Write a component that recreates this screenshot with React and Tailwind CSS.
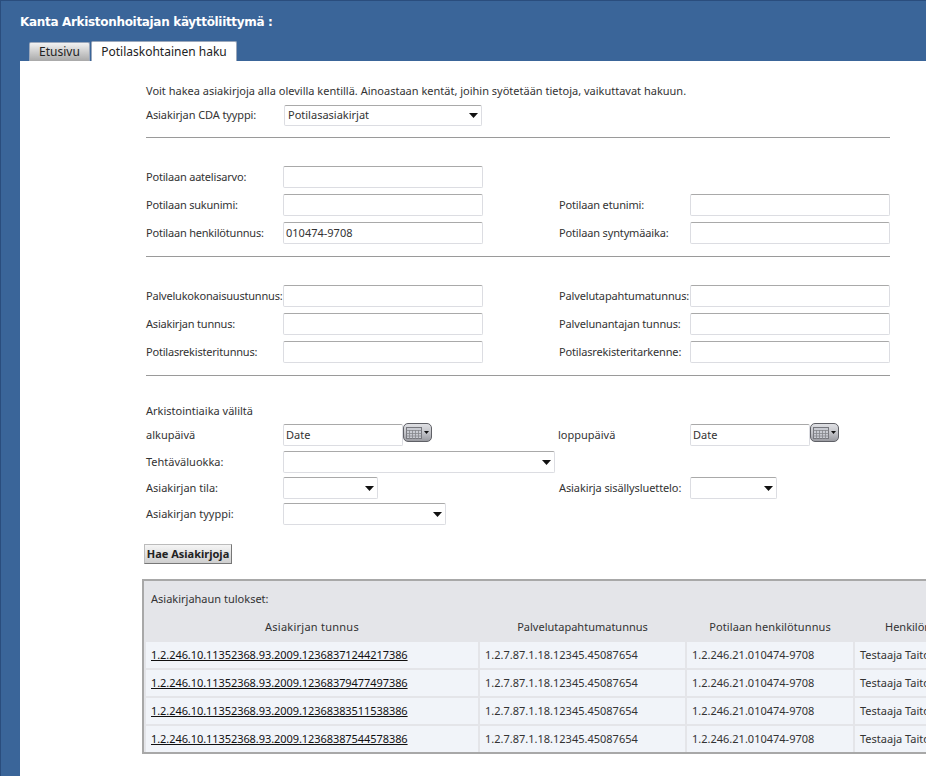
function Arrow() {
  return <svg width="9" height="5" viewBox="0 0 9 5" className="shrink-0"><path d="M0 0h9L4.5 5z" fill="#111" /></svg>;
}
function Input({ value = "", w = "w-[200px]" }) {
  return <div className={`${w} h-[22px] shrink-0 flex items-center bg-white rounded-[2px] border border-[#dcdde2] border-t-[#a9a9a9] pl-[2px] text-[#333]`}>{value}</div>;
}
function Sel({ value = "", w }) {
  return <div className={`${w} h-[22px] shrink-0 flex items-center justify-between bg-white rounded-[2px] border border-[#dcdde2] border-t-[#a9a9a9] pl-[3px] pr-[3px] text-[#333]`}><span>{value}</span><Arrow /></div>;
}
function Cal() {
  return (
    <div className="mb-[4px] w-[29px] h-[19px] shrink-0 flex items-center justify-center gap-[2px] rounded-[5px] border border-[#5f6066] bg-gradient-to-b from-[#dfe0e4] via-[#c4c5ca] to-[#9a9ba1]">
      <svg width="16" height="12" viewBox="0 0 16 12"><rect x=".5" y=".5" width="15" height="11" fill="#c9cbd2" stroke="#77787e" /><path d="M.5 3.500h15M.5 6.500h15M.5 9h15M3.500 3v9M6.500 3v9M9.500 3v9M12.500 3v9" stroke="#85868c" strokeWidth=".8" /></svg>
      <svg width="5" height="3" viewBox="0 0 5 3"><path d="M0 0h5L2.500 3z" fill="#111" /></svg>
    </div>
  );
}
function Row({ left, right, leftInput, rightInput, mt = "mt-[6px]" }) {
  return (
    <div className={`flex items-center ${mt}`}>
      <div className="w-[137px] shrink-0 whitespace-nowrap tracking-[-0.2px]">{left}</div>
      {leftInput}
      <div className="ml-[76px] w-[131px] shrink-0 whitespace-nowrap tracking-[-0.15px]">{right}</div>
      {rightInput}
    </div>
  );
}
const Hr = ({ mt }) => <div className={`h-[1px] bg-[#9a9a9a] ${mt}`} />;
const rows = ["1.2.246.10.11352368.93.2009.12368371244217386", "1.2.246.10.11352368.93.2009.12368379477497386", "1.2.246.10.11352368.93.2009.12368383511538386", "1.2.246.10.11352368.93.2009.12368387544578386"];

export default function App() {
  return (
    <div className="w-[926px] h-[776px] overflow-hidden bg-[#3a6599] border-l border-t border-[#2a4d7d] text-[11px] leading-[14px] text-[#333] font-['Noto_Sans',sans-serif]">
      <div className="pl-[19px] pt-[14px] h-[40px] text-white font-bold text-[12px] font-['DejaVu_Sans',sans-serif] tracking-[-0.32px]">Kanta Arkistonhoitajan käyttöliittymä :</div>
      <div className="flex items-end pl-[28px] h-[20px]">
        <div className="w-[61px] h-[19px] flex items-center justify-center rounded-t-[2px] border border-b-0 border-[#9aa7bb] bg-gradient-to-b from-[#f2f2f2] to-[#a9a9a9] text-[#222] text-[12px]">Etusivu</div>
        <div className="ml-[1px] w-[146px] h-[20px] flex items-center justify-center rounded-t-[2px] border border-b-0 border-[#9aa7bb] bg-white text-[#222] text-[12px]">Potilaskohtainen haku</div>
      </div>
      <div className="ml-[19px] h-[720px] bg-white pt-[23px] pl-[126px] pr-[36px] overflow-hidden">
        <div className="whitespace-nowrap">Voit hakea asiakirjoja alla olevilla kentillä. Ainoastaan kentät, joihin syötetään tietoja, vaikuttavat hakuun.</div>
        <div className="flex items-center mt-[7px] h-[20px]">
          <div className="w-[138px] tracking-[-0.1px]">Asiakirjan CDA tyyppi:</div>
          <Sel value="Potilasasiakirjat" w="w-[198px] !h-[21px]" />
        </div>
        <Hr mt="mt-[12px]" />
        <Row mt="mt-[28px]" left="Potilaan aatelisarvo:" leftInput={<Input />} />
        <Row left="Potilaan sukunimi:" leftInput={<Input />} right="Potilaan etunimi:" rightInput={<Input />} />
        <Row left="Potilaan henkilötunnus:" leftInput={<Input value="010474-9708" />} right="Potilaan syntymäaika:" rightInput={<Input />} />
        <Hr mt="mt-[12px]" />
        <Row mt="mt-[28px]" left="Palvelukokonaisuustunnus:" leftInput={<Input />} right="Palvelutapahtumatunnus:" rightInput={<Input />} />
        <Row left="Asiakirjan tunnus:" leftInput={<Input />} right="Palvelunantajan tunnus:" rightInput={<Input />} />
        <Row left="Potilasrekisteritunnus:" leftInput={<Input />} right="Potilasrekisteritarkenne:" rightInput={<Input />} />
        <Hr mt="mt-[12px]" />
        <div className="mt-[28px]">Arkistointiaika väliltä</div>
        <div className="flex items-center mt-[5px]">
          <div className="w-[137px] shrink-0">alkupäivä</div>
          <Input value="Date" w="w-[120px]" />
          <Cal />
          <div className="ml-[126px] w-[132px] shrink-0">loppupäivä</div>
          <Input value="Date" w="w-[120px]" />
          <Cal />
        </div>
        <div className="flex items-center mt-[5px]">
          <div className="w-[137px] shrink-0">Tehtäväluokka:</div>
          <Sel w="w-[272px]" />
        </div>
        <div className="flex items-center mt-[4px]">
          <div className="w-[137px] shrink-0">Asiakirjan tila:</div>
          <Sel w="w-[95px]" />
          <div className="ml-[181px] w-[131px] shrink-0 whitespace-nowrap tracking-[-0.1px]">Asiakirja sisällysluettelo:</div>
          <Sel w="w-[87px]" />
        </div>
        <div className="flex items-center mt-[4px]">
          <div className="w-[137px] shrink-0">Asiakirjan tyyppi:</div>
          <Sel w="w-[163px]" />
        </div>
        <button className="mt-[19px] -ml-[2px] block w-[88px] h-[20px] p-0 whitespace-nowrap border border-[#777] border-t-[#bbb] border-l-[#bbb] bg-gradient-to-b from-[#f5f5f5] to-[#cfcfcf] font-bold text-[11px] text-[#222]">Hae Asiakirjoja</button>
        <div className="mt-[15px] -ml-[4px] w-[900px] h-[175px] bg-[#e4e5e9] border-t-2 border-l-2 border-b-2 border-[#a8a8a8] pl-[2px]">
          <div className="pl-[5px] pt-[11px] h-[26px]">Asiakirjahaun tulokset:</div>
          <table className="border-separate border-spacing-x-[2px] border-spacing-y-[2px] -ml-[2px] mt-[5px] table-fixed w-[900px]">
            <thead>
              <tr className="h-[26px]">
                <th className="w-[332px] font-normal tracking-[0.25px]">Asiakirjan tunnus</th>
                <th className="w-[205px] font-normal">Palvelutapahtumatunnus</th>
                <th className="w-[166px] font-normal tracking-[0.1px]">Potilaan henkilötunnus</th>
                <th className="w-[200px] font-normal whitespace-nowrap text-left pl-[30px]">Henkilön nimi</th>
              </tr>
            </thead>
            <tbody>
              {rows.map((r) => (
                <tr key={r} className="h-[26px] bg-[#f1f4f9]">
                  <td className="pl-[5px]"><span className="underline text-[#111] tracking-[-0.07px]">{r}</span></td>
                  <td className="pl-[5px]">1.2.7.87.1.18.12345.45087654</td>
                  <td className="pl-[5px]">1.2.246.21.010474-9708</td>
                  <td className="pl-[5px] whitespace-nowrap">Testaaja Taito</td>
                </tr>
              ))}
            </tbody>
          </table>
        </div>
      </div>
    </div>
  );
}
